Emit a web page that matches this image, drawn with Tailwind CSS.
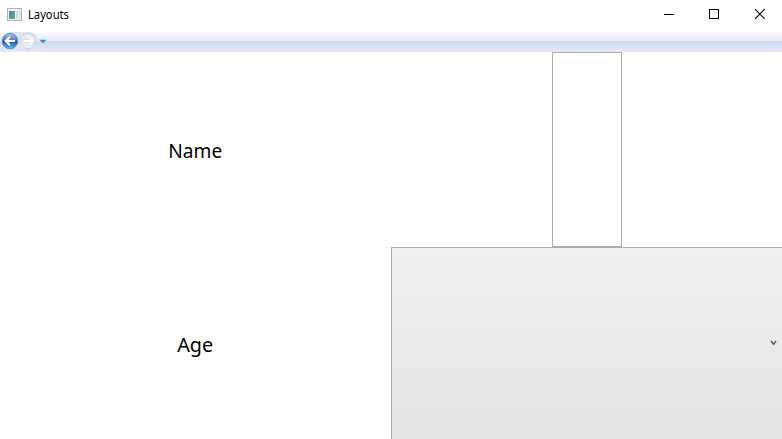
<!DOCTYPE html>
<html lang="en">
<head>
<meta charset="utf-8">
<title>Layouts</title>
<script src="https://cdn.jsdelivr.net/npm/@tailwindcss/browser@4"></script>
</head>
<body class="flex h-screen flex-col overflow-hidden bg-white font-['Noto_Sans',sans-serif] text-black">
<header class="flex h-[30px] shrink-0 items-start justify-between">
  <div class="flex h-[29px] items-center pl-[7px]">
    <svg class="-mt-px h-[13px] w-[15px]" viewBox="0 0 15 13">
      <defs><linearGradient id="app" x1="0" y1="0" x2="1" y2="1"><stop offset="0" stop-color="#4a7fae"/><stop offset="1" stop-color="#55b98a"/></linearGradient></defs>
      <rect x=".5" y=".5" width="14" height="12" fill="#f5f5f5" stroke="#b0b0b0"/>
      <rect x="2" y="3" width="6" height="8" fill="url(#app)"/>
      <rect x="9" y="3" width="2" height="8" fill="#d9dcdc"/>
      <rect x="12" y="3" width="1.5" height="8" fill="#d9dcdc"/>
    </svg>
    <svg class="ml-[6px] h-[29px] w-[60px]" viewBox="0 0 60 29"><text x="0" y="19" font-size="12" textLength="41" lengthAdjust="spacingAndGlyphs">Layouts</text></svg>
  </div>
  <div class="flex">
    <svg class="h-[29px] w-[46px]" viewBox="0 0 46 29" shape-rendering="crispEdges"><path d="M18 14.5H28" stroke="#000"/></svg>
    <svg class="h-[29px] w-[45px]" viewBox="0 0 45 29" shape-rendering="crispEdges"><rect x="17.5" y="9.5" width="9" height="9" fill="none" stroke="#000"/></svg>
    <svg class="h-[29px] w-[45px]" viewBox="0 0 45 29"><path d="M18 9.2 27.6 18.8M27.6 9.2 18 18.8" stroke="#000" stroke-width="1.15"/></svg>
  </div>
</header>
<nav class="h-[22px] shrink-0 bg-[linear-gradient(#ffffff_0px,#e5eaf4_11px,#d0d8ec_11px,#e5e9fa_22px)]">
  <svg class="h-[22px] w-[54px]" viewBox="0 0 54 22">
    <defs>
      <linearGradient id="back" x1="0" y1="0" x2="0" y2="1"><stop offset="0" stop-color="#b4c8ea"/><stop offset=".45" stop-color="#4a7cc6"/><stop offset=".52" stop-color="#1b52a8"/><stop offset="1" stop-color="#55c0f2"/></linearGradient>
      <linearGradient id="next" x1="0" y1="0" x2="0" y2="1"><stop offset="0" stop-color="#f4f5fa"/><stop offset=".5" stop-color="#dfe3ee"/><stop offset="1" stop-color="#f5f6fb"/></linearGradient>
    </defs>
    <path d="M10 2.5H29Q33 2.5 36 6Q38 10 36 15Q33 19.5 28 19.5H10Z" fill="#e3e7f3" stroke="#d3d8e8" stroke-width=".6"/>
    <circle cx="10" cy="11" r="7.8" fill="url(#back)" stroke="#587eb7" stroke-width=".8"/>
    <path d="M15 11H6M10 6.8 5.8 11 10 15.2" fill="none" stroke="#fff" stroke-width="2.1"/>
    <circle cx="28.2" cy="11" r="7.6" fill="url(#next)" stroke="#c5cad6" stroke-width=".8"/>
    <path d="M23.5 11H32.5M28.5 6.8 32.7 11 28.5 15.2" fill="none" stroke="#ced3dd" stroke-width="3"/>
    <path d="M23.5 11H32.5M28.5 6.8 32.7 11 28.5 15.2" fill="none" stroke="#fff" stroke-width="2.1"/>
    <path d="M39.5 9.8H46.5L43 13.5Z" fill="#1f94c4"/>
  </svg>
</nav>
<main class="grid h-[390px] shrink-0 grid-cols-2 grid-rows-2">
  <label class="flex items-center justify-center">
    <svg class="h-[40px] w-[60px]" viewBox="0 0 60 40"><text x="2.3" y="28" font-size="19.5" textLength="54" lengthAdjust="spacingAndGlyphs">Name</text></svg>
  </label>
  <div class="flex justify-center"><div class="ml-px h-full w-[70px] border border-[#abadb3] bg-white"></div></div>
  <label class="flex items-center justify-center">
    <svg class="h-[40px] w-[60px]" viewBox="0 0 60 40"><text x="11.2" y="27" font-size="19.5" textLength="36" lengthAdjust="spacingAndGlyphs">Age</text></svg>
  </label>
  <div class="flex items-center justify-end border border-r-0 border-[#acacac] bg-linear-to-b from-[#f0f0f0] to-[#e5e5e5] pr-[5px] pb-[4px]">
    <svg class="h-[6px] w-[7px]" viewBox="0 0 7 6"><path d="M1 1 3.5 4.2 6 1" fill="none" stroke="#606060" stroke-width="1.6"/></svg>
  </div>
</main>
</body>
</html>
